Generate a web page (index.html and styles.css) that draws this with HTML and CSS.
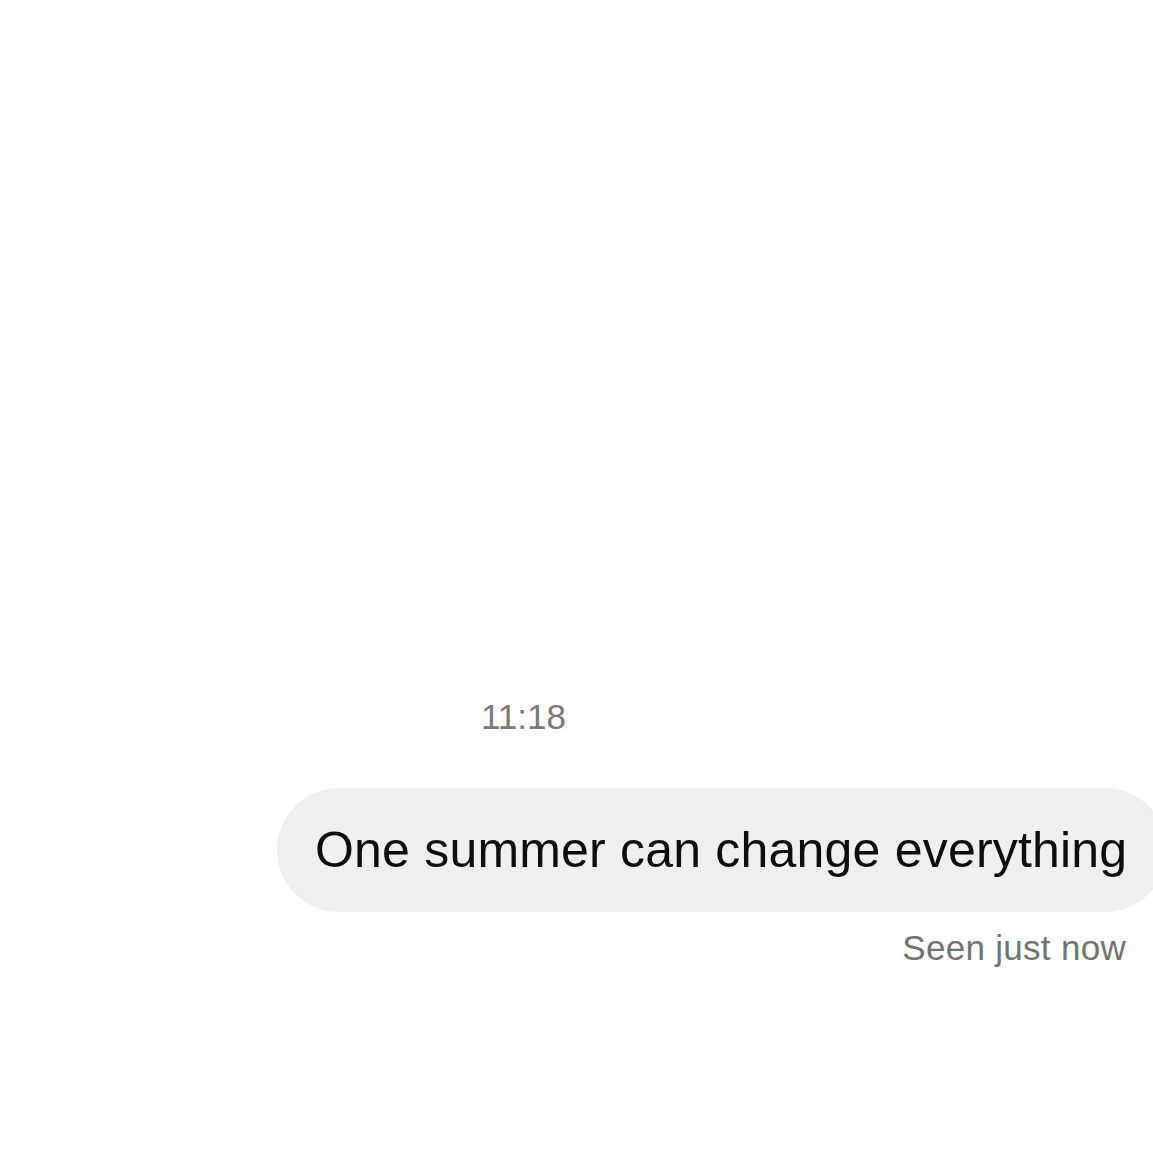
FILE: index.html
```
<!DOCTYPE html>
<html lang="en">
<head>
  <meta charset="UTF-8" />
  <title>Messages</title>
  <link rel="stylesheet" href="styles.css">
</head>
<body>

  <div class="thread">
    <div class="time">11:18</div>

    <div class="bubble">One summer can change everything</div>

    <div class="seen">Seen just now</div>
  </div>

</body>
</html>
```

FILE: styles.css
```
html, body {
  margin: 0;
  height: 100%;
}
body {
  background-color: #fefefe;
  font-family: "Liberation Sans", Arial, sans-serif;
  overflow: hidden;
}
.thread {
  padding-top: 697px;
  display: flex;
  flex-direction: column;
}
.time {
  padding-left: 481px;
  font-size: 35px;
  line-height: 40px;
  color: #7a7a7a;
}
.bubble {
  align-self: flex-start;
  margin-top: 51px;
  margin-left: 277px;
  width: 890px;
  height: 124px;
  padding-left: 38px;
  box-sizing: border-box;
  flex-shrink: 0;
  background-color: #efefef;
  border-radius: 62px;
  font-size: 50px;
  line-height: 124px;
  letter-spacing: 0.2px;
  color: #0d0d0d;
  white-space: nowrap;
}
.seen {
  margin-top: 16px;
  align-self: flex-end;
  padding-right: 27px;
  font-size: 35px;
  line-height: 40px;
  letter-spacing: 0.3px;
  color: #737373;
}
```
